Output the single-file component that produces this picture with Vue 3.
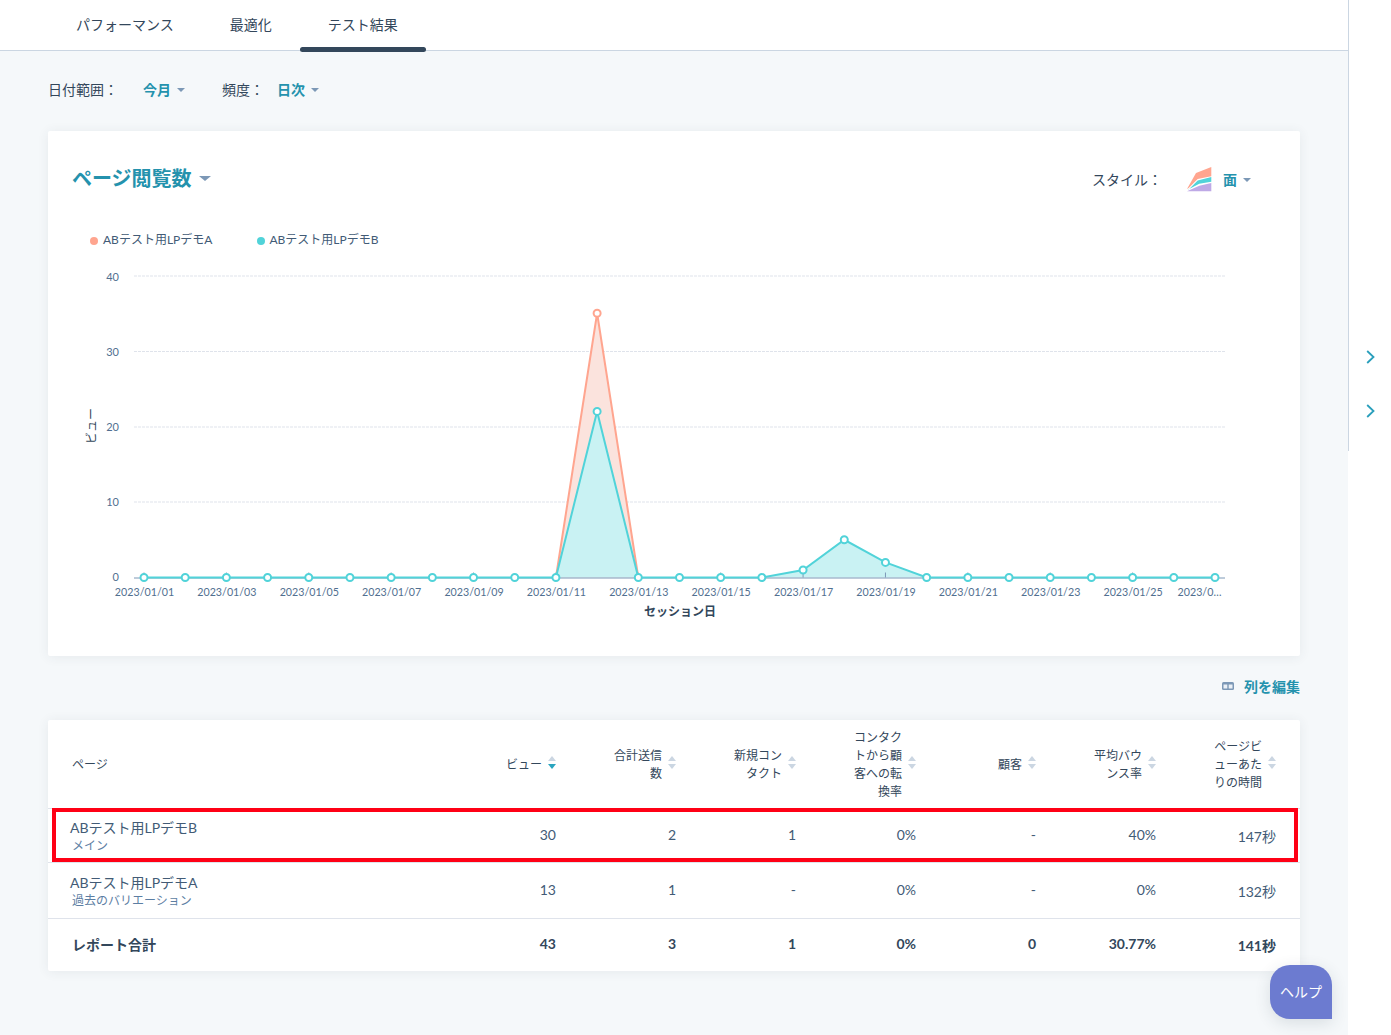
<script setup>
const tabs = [
  { label: 'パフォーマンス' },
  { label: '最適化' },
  { label: 'テスト結果', active: true }
]

// chart geometry, in page pixels (see the svg viewBox)
const x0 = 144
const step = (1215 - 144) / 26
const yZero = 577.5
const perUnit = 7.55
const xAt = (i) => x0 + i * step
const yAt = (v) => yZero - v * perUnit

const seriesB = Array.from({ length: 27 }, (_, i) => ({ 11: 22, 16: 1, 17: 5, 18: 2 }[i] || 0))

const lineA = `${xAt(10)},${yZero} ${xAt(11)},${yAt(35)} ${xAt(12)},${yZero}`
const lineB = seriesB.map((v, i) => `${xAt(i).toFixed(1)},${yAt(v).toFixed(1)}`).join(' ')
const areaB = `${xAt(0)},${yZero} ${lineB} ${xAt(26)},${yZero}`

const markersB = seriesB.map((v, i) => ({ x: xAt(i), y: yAt(v) }))

const yTicks = [
  { label: '40', y: 276, textY: 281 },
  { label: '30', y: 351.5, textY: 356 },
  { label: '20', y: 427, textY: 431 },
  { label: '10', y: 502, textY: 506 },
  { label: '0', y: 577.5, textY: 581 }
]

const dates = ['01', '03', '05', '07', '09', '11', '13', '15', '17', '19', '21', '23', '25']
const xTicks = dates.map((d, i) => ({ label: `2023/01/${d}`, x: xAt(i * 2) }))

const columns = [
  { label: 'ビュー', active: true },
  { label: '合計送信数' },
  { label: '新規コンタクト' },
  { label: 'コンタクトから顧客への転換率' },
  { label: '顧客' },
  { label: '平均バウンス率' },
  { label: 'ページビューあたりの時間' }
]

const rows = [
  { name: 'ABテスト用LPデモB', sub: 'メイン', values: ['30', '2', '1', '0%', '-', '40%'], time: '147秒' },
  { name: 'ABテスト用LPデモA', sub: '過去のバリエーション', values: ['13', '1', '-', '0%', '-', '0%'], time: '132秒' }
]
const totals = ['43', '3', '1', '0%', '0', '30.77%']
</script>

<template>
  <div class="page">
    <main class="main">
      <nav class="tabs">
        <a v-for="tab in tabs" :key="tab.label" class="tab" :class="{ active: tab.active }">{{ tab.label }}</a>
      </nav>

      <div class="content">
        <div class="filters">
          <span class="filter-label">日付範囲：</span>
          <span class="filter-value first">今月<i class="caret"></i></span>
          <span class="filter-label second">頻度：</span>
          <span class="filter-value">日次<i class="caret"></i></span>
        </div>

        <section class="card chart-card">
          <div class="chart-head">
            <h2 class="chart-title">ページ閲覧数<i class="caret big"></i></h2>
            <div class="style-picker">
              <span class="style-label">スタイル：</span>
              <svg class="style-icon" width="25" height="25" viewBox="0 0 25 25">
                <polygon points="0,22 9,6 24.3,0 24.3,9.3 10.7,12 1.7,21" fill="#ffa58f" />
                <polygon points="1.7,22.5 10.7,13.5 24.3,10 24.3,14.7 12.3,16.7 0.7,22.7" fill="#51d3d9" />
                <polygon points="0,24.3 12.3,18.7 24.3,16 24.3,24.3" fill="#bea9e6" />
              </svg>
              <span class="filter-value">面<i class="caret"></i></span>
            </div>
          </div>

          <div class="legend">
            <span class="legend-item"><i class="dot orange"></i>ABテスト用LPデモA</span>
            <span class="legend-item"><i class="dot teal"></i>ABテスト用LPデモB</span>
          </div>

          <svg class="chart" width="1252" height="360" viewBox="48 264 1252 360">
            <line
              v-for="t in yTicks.slice(0, 4)"
              :key="t.label"
              x1="134" x2="1225"
              :y1="t.y" :y2="t.y"
              stroke="#dfe3eb"
              stroke-dasharray="3 1"
            />
            <text
              v-for="t in yTicks"
              :key="'y' + t.label"
              class="tick"
              x="119"
              :y="t.textY"
              text-anchor="end"
            >{{ t.label }}</text>
            <text class="axis-y" transform="translate(96 426) rotate(-90)" text-anchor="middle">ビュー</text>

            <polygon :points="lineA" fill="#fbe3dd" />
            <polygon :points="areaB" fill="#c9f2f3" />

            <line x1="134" x2="1225" :y1="yZero + 0.5" :y2="yZero + 0.5" stroke="#7c98b6" />
            <line
              v-for="t in xTicks"
              :key="'m' + t.label"
              :x1="t.x" :x2="t.x"
              :y1="yZero - 5" :y2="yZero"
              stroke="#7c98b6"
            />

            <polyline :points="lineA" fill="none" stroke="#ffa58f" stroke-width="2" />
            <polyline :points="lineB" fill="none" stroke="#51d3d9" stroke-width="2" />

            <circle :cx="xAt(11)" :cy="yAt(35)" r="3.5" fill="#fff" stroke="#ffa58f" stroke-width="2" />
            <circle
              v-for="(m, i) in markersB"
              :key="i"
              :cx="m.x" :cy="m.y"
              r="3.5"
              fill="#fff"
              stroke="#51d3d9"
              stroke-width="2"
            />

            <text
              v-for="t in xTicks"
              :key="'x' + t.label"
              class="tick date"
              :x="t.x + 0.5"
              y="596"
              text-anchor="middle"
            >{{ t.label }}</text>
            <text class="tick date" x="1199.5" y="596" text-anchor="middle">2023/0…</text>
            <text class="axis-x" x="680" y="616" text-anchor="middle">セッション日</text>
          </svg>
        </section>

        <div class="table-tools">
          <svg width="12" height="8" viewBox="0 0 12 8">
            <rect width="12" height="8" rx="1.5" fill="#7c98b6" />
            <rect x="1.5" y="2.5" width="3.8" height="4" fill="#eaf0f6" />
            <rect x="6.7" y="2.5" width="3.8" height="4" fill="#eaf0f6" />
          </svg>
          <span class="edit-link">列を編集</span>
        </div>

        <section class="card table-card">
          <div class="grid head-row">
            <div class="head-page">ページ</div>
            <div v-for="col in columns" :key="col.label" class="head-cell">
              <span class="head-text">{{ col.label }}</span>
              <span class="sort">
                <i class="sort-up"></i>
                <i class="sort-down" :class="{ on: col.active }"></i>
              </span>
            </div>
          </div>

          <div v-for="row in rows" :key="row.name" class="grid body-row">
            <div class="name-cell">
              <div class="name">{{ row.name }}</div>
              <div class="sub">{{ row.sub }}</div>
            </div>
            <div v-for="(v, i) in row.values" :key="i" class="num">{{ v }}</div>
            <div class="num time">{{ row.time }}</div>
          </div>

          <div class="grid total-row">
            <div class="total-name">レポート合計</div>
            <div v-for="(v, i) in totals" :key="i" class="num">{{ v }}</div>
            <div class="num time">141秒</div>
          </div>

          <div class="highlight"></div>
        </section>
      </div>

      <button class="help">ヘルプ</button>
    </main>

    <aside class="side">
      <div class="side-rail">
        <svg v-for="n in 2" :key="n" class="chevron" width="9" height="14" viewBox="0 0 9 14">
          <path d="M1.2 1 L7.5 7 L1.2 13" fill="none" stroke="#2a9fbc" stroke-width="1.8" />
        </svg>
      </div>
    </aside>
  </div>
</template>

<style>
html, body {
  margin: 0;
  background: #fff;
}
</style>

<style scoped>
.page {
  display: flex;
  width: 1391px;
  height: 1035px;
  overflow: hidden;
  font-family: Lato, "Noto Sans CJK JP", sans-serif;
  color: #33475b;
  font-size: 14px;
}

.main {
  position: relative;
  width: 1348px;
  flex-shrink: 0;
  background: #f5f8fa;
}

.tabs {
  display: flex;
  height: 50px;
  padding-left: 48px;
  background: #fff;
  border-bottom: 1px solid #cbd6e2;
}

.tab {
  position: relative;
  padding: 0 28px;
  line-height: 50px;
  font-size: 14px;
  color: #33475b;
}

.tab.active::after {
  content: '';
  position: absolute;
  left: 0;
  right: 0;
  top: 47px;
  height: 5px;
  border-radius: 3px;
  background: #33475b;
}

.content {
  padding: 0 48px;
}

.filters {
  display: flex;
  align-items: center;
  height: 20px;
  margin-top: 28px;
  color: #425b76;
}

.filter-label {
  color: #33475b;
}

.filter-value {
  display: inline-flex;
  align-items: center;
  font-weight: 700;
  color: #2492ad;
}

.filter-value.first {
  margin-left: 25px;
}

.filter-label.second {
  margin-left: 37px;
}

.filter-label.second + .filter-value {
  margin-left: 13px;
}

.caret {
  display: inline-block;
  width: 0;
  height: 0;
  margin-left: 6px;
  margin-top: 2px;
  border-left: 4px solid transparent;
  border-right: 4px solid transparent;
  border-top: 4px solid #7c98b6;
}

.caret.big {
  margin-left: 7px;
  border-left-width: 6px;
  border-right-width: 6px;
  border-top-width: 5px;
}

.card {
  background: #fff;
  border-radius: 2px;
  box-shadow: 0 1px 12px rgba(45, 62, 80, 0.08);
}

.chart-card {
  height: 525px;
  margin-top: 32px;
}

.chart-head {
  display: flex;
  justify-content: space-between;
  align-items: center;
  height: 30px;
  padding: 31px 49px 0 24px;
}

.chart-title {
  display: flex;
  align-items: center;
  margin: 0;
  font-size: 20px;
  font-weight: 700;
  color: #2492ad;
}

.style-picker {
  display: flex;
  align-items: center;
  margin-top: 4px;
}

.style-label {
  margin-right: 25px;
  color: #33475b;
}

.style-icon {
  margin-right: 11px;
}

.legend {
  display: flex;
  gap: 45px;
  height: 18px;
  margin-top: 39px;
  padding-left: 42px;
  font-size: 12px;
  line-height: 18px;
  color: #425b76;
}

.legend-item {
  display: flex;
  align-items: center;
}

.legend-item + .legend-item .dot {
  margin-right: 4px;
}

.dot {
  width: 8px;
  height: 8px;
  margin-right: 5px;
  margin-top: 2px;
  border-radius: 50%;
}

.dot.orange {
  background: #ffa58f;
}

.dot.teal {
  background: #51d3d9;
}

.chart {
  display: block;
  margin-top: 15px;
}

.tick {
  font-size: 11px;
  fill: #516f90;
}

.tick.date {
  font-size: 10.7px;
}

.axis-y {
  font-size: 12px;
  fill: #33475b;
}

.axis-x {
  font-size: 12px;
  font-weight: 700;
  fill: #33475b;
}

.table-tools {
  display: flex;
  justify-content: flex-end;
  align-items: center;
  gap: 10px;
  height: 18px;
  margin-top: 21px;
}

.edit-link {
  font-weight: 700;
  color: #2492ad;
}

.table-card {
  position: relative;
  margin-top: 25px;
}

.grid {
  display: grid;
  grid-template-columns: 364px repeat(7, 120px);
  padding: 0 24px;
  align-items: center;
}

.head-row {
  height: 88px;
  border-bottom: 1px solid #dfe3eb;
  font-size: 12px;
  line-height: 18px;
}

.head-page {
  padding-top: 2px;
}

.head-cell {
  display: flex;
  justify-content: flex-end;
  align-items: center;
  gap: 6px;
}

.head-text {
  max-width: 48px;
  padding-top: 2px;
  text-align: right;
  word-break: break-all;
  line-break: anywhere;
}

.sort {
  display: flex;
  flex-direction: column;
  gap: 3px;
  margin-bottom: 4px;
}

.sort-up,
.sort-down {
  width: 0;
  height: 0;
  border-left: 4px solid transparent;
  border-right: 4px solid transparent;
}

.sort-up {
  border-bottom: 5px solid #cbd6e2;
}

.sort-down {
  border-top: 5px solid #cbd6e2;
}

.sort-down.on {
  border-top-color: #2aa5bf;
}

.body-row {
  height: 53px;
  border-bottom: 1px solid #dfe3eb;
}

.body-row + .body-row {
  height: 55px;
}

.name-cell {
  padding-top: 1px;
  line-height: 17px;
}

.name {
  margin-left: -2px;
  color: #425b76;
}

.sub {
  margin-top: 1px;
  font-size: 12px;
  color: #5c7ea3;
}

.num {
  padding-bottom: 2px;
  text-align: right;
  color: #425b76;
}

.total-row {
  height: 52px;
}

.total-row .num {
  padding-bottom: 4px;
  font-weight: 700;
  color: #33475b;
}

.num.time {
  padding-bottom: 0;
}

.total-name {
  padding-bottom: 2px;
  font-weight: 700;
  color: #33475b;
}

.highlight {
  position: absolute;
  left: 4px;
  right: 2px;
  top: 88px;
  height: 54px;
  box-sizing: border-box;
  border: 4px solid #ff0015;
  pointer-events: none;
}

.help {
  position: absolute;
  left: 1270px;
  top: 965px;
  width: 62px;
  height: 54px;
  padding: 0 0 2px;
  border: 0;
  border-radius: 20px 20px 0 20px;
  background: #6c7bd0;
  color: #fff;
  font: inherit;
  box-shadow: 0 4px 16px rgba(45, 62, 80, 0.14);
}

.side {
  flex: 1;
  background: #fff;
}

.side-rail {
  box-sizing: border-box;
  display: flex;
  flex-direction: column;
  gap: 40px;
  height: 451px;
  padding: 350px 0 0 17px;
  border-left: 1px solid #cbd6e2;
}

.chevron {
  display: block;
}
</style>
